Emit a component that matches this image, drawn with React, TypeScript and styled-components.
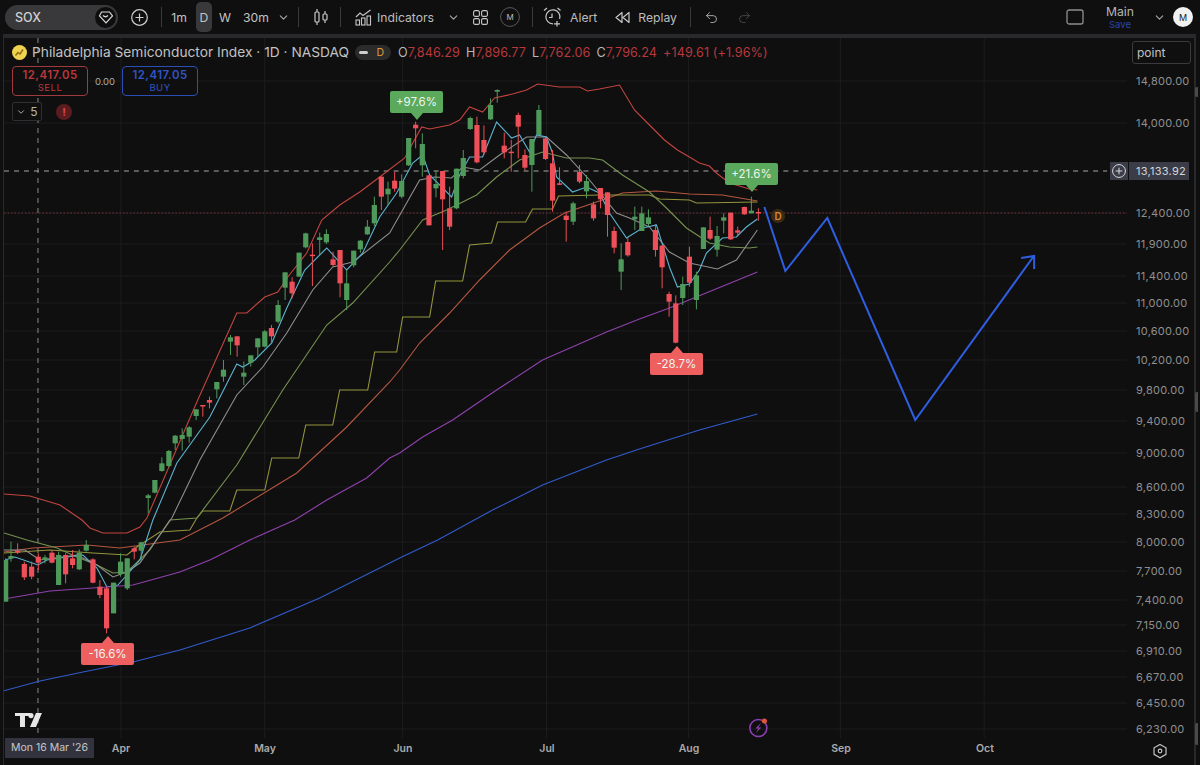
import React from 'react';
import styled, { createGlobalStyle } from 'styled-components';
import { ChevronDown, Undo2, Redo2 } from 'lucide-react';

const GlobalStyle = createGlobalStyle`
  html, body {
    margin: 0;
    padding: 0;
    background: #0f0f10;
    overflow: hidden;
  }
  * { box-sizing: border-box; }
`;

const Page = styled.div`
  width: 1200px;
  height: 765px;
  display: flex;
  flex-direction: column;
  background: #0f0f10;
  color: #c9c9c9;
  font-family: Inter, 'Liberation Sans', sans-serif;
  font-size: 13px;
  overflow: hidden;
`;

const Toolbar = styled.header`
  height: 34px;
  flex: none;
  display: flex;
  align-items: center;
  padding: 0 7px 0 5px;
`;

const ToolGroup = styled.div<{ $gap?: number; $left?: number }>`
  display: flex;
  align-items: center;
  gap: ${(p) => p.$gap ?? 0}px;
  margin-left: ${(p) => p.$left ?? 0}px;
`;

const Symbol = styled.div`
  width: 113px;
  height: 25px;
  display: flex;
  align-items: center;
  justify-content: space-between;
  padding: 0 2px 0 10px;
  border-radius: 13px;
  background: #39393b;
  color: #d0d0d0;
  font-size: 12.5px;
  font-weight: 500;
`;

const SymbolBadge = styled.span`
  width: 21px;
  height: 21px;
  display: flex;
  align-items: center;
  justify-content: center;
  border-radius: 50%;
  background: #0e0e0f;
`;

const Divider = styled.span<{ $left: number }>`
  width: 1px;
  height: 20px;
  margin-left: ${(p) => p.$left}px;
  background: #3a3a3c;
`;

const Interval = styled.span<{ $active?: boolean; $width: number }>`
  width: ${(p) => p.$width}px;
  height: 30px;
  display: flex;
  align-items: center;
  justify-content: center;
  border-radius: 5px;
  background: ${(p) => (p.$active ? '#39393b' : 'transparent')};
  color: #c4c4c4;
  font-size: 12.2px;
`;

const ToolLabel = styled.span`
  color: #bdbdbd;
  font-size: 12.2px;
  white-space: nowrap;
`;

const LayoutTitle = styled.div`
  width: 40px;
  margin-left: 16px;
  display: flex;
  flex-direction: column;
  align-items: center;
  color: #b5b5b5;
  font-size: 12.2px;
  line-height: 14px;
`;

const SaveLabel = styled.span`
  margin-top: 1px;
  color: #2a46a8;
  font-size: 9.5px;
  line-height: 10px;
`;

const Avatar = styled.span`
  width: 20px;
  height: 20px;
  margin-left: 7px;
  display: flex;
  align-items: center;
  justify-content: center;
  border-radius: 50%;
  background: #f1f1f1;
  color: #222;
  font-size: 9px;
`;

const Spacer = styled.div`
  flex: 1;
`;

const ChartFrame = styled.main`
  position: relative;
  flex: 1;
  margin-right: 4px;
  margin-left: 3px;
  border-top: 4px solid #29292b;
  border-left: 1px solid #29292b;
  border-right: 2px solid #29292b;
`;

const Canvas = styled.svg`
  position: absolute;
  inset: 0;
  width: 100%;
  height: 100%;
  display: block;
`;

const Legend = styled.div`
  position: absolute;
  left: 8px;
  top: 3px;
  display: flex;
  flex-direction: column;
  align-items: flex-start;
`;

const TitleRow = styled.div`
  height: 22px;
  display: flex;
  align-items: center;
  white-space: nowrap;
`;

const SymbolName = styled.span`
  margin-left: 5px;
  color: #c2c2c2;
  font-size: 13.75px;
`;

const StatusPill = styled.span`
  width: 36px;
  height: 15px;
  margin-left: 6px;
  padding: 0 7px 0 4px;
  display: flex;
  align-items: center;
  justify-content: space-between;
  border-radius: 8px;
  background: #2b2b2c;
  color: #dc9c3e;
  font-size: 10.5px;
`;

const PillDash = styled.span`
  width: 9px;
  height: 3px;
  border-radius: 2px;
  background: #cfcfcf;
`;

const Ohlc = styled.span`
  margin-left: 7px;
  font-size: 12.6px;
  color: #b8b8b8;
  letter-spacing: 0.1px;
`;

const OhlcValue = styled.span<{ $gap?: number }>`
  color: #b8383c;
  margin-right: ${(p) => p.$gap ?? 6}px;
`;

const TradeRow = styled.div`
  margin-top: 3px;
  display: flex;
  align-items: center;
`;

const TradeButton = styled.div<{ $tone: string; $text: string }>`
  width: 76px;
  height: 30px;
  display: flex;
  flex-direction: column;
  align-items: center;
  justify-content: center;
  border: 1px solid ${(p) => p.$tone};
  border-radius: 4px;
  background: #0f0f10;
  color: ${(p) => p.$text};
  font-size: 11.4px;
  font-weight: 600;
  line-height: 13px;
  letter-spacing: 0.5px;
`;

const TradeSide = styled.span`
  font-size: 9.5px;
  font-weight: 400;
  letter-spacing: 0.5px;
  line-height: 11px;
`;

const Spread = styled.span`
  width: 34px;
  text-align: center;
  color: #aaa;
  font-size: 9.5px;
`;

const StudyRow = styled.div`
  margin-top: 6px;
  display: flex;
  align-items: center;
  gap: 14px;
`;

const StudyToggle = styled.div`
  width: 30px;
  height: 19px;
  display: flex;
  align-items: center;
  justify-content: center;
  gap: 4px;
  border: 1px solid #2f2f31;
  border-radius: 2px;
  background: #0f0f10;
  color: #b5b5b5;
  font-size: 12px;
`;

const AlertDot = styled.span`
  width: 16px;
  height: 16px;
  display: flex;
  align-items: center;
  justify-content: center;
  border-radius: 50%;
  background: #5a1c1e;
  color: #d8454a;
  font-size: 11px;
  font-weight: 700;
`;

const ScaleMode = styled.div`
  position: absolute;
  right: 3px;
  top: 3px;
  width: 59px;
  height: 23px;
  display: flex;
  align-items: center;
  padding-left: 4px;
  border: 1px solid #3b3b3d;
  border-radius: 3px;
  color: #c2c2c2;
  font-size: 12px;
`;

const PriceTick = styled.span<{ $y: number }>`
  position: absolute;
  left: 1132px;
  top: ${(p) => p.$y - 38 - 8}px;
  height: 16px;
  line-height: 16px;
  color: #8f8f8f;
  font-size: 11px;
  letter-spacing: 0.25px;
`;

const CrosshairPrice = styled.div`
  position: absolute;
  left: 1106px;
  top: 124px;
  display: flex;
  gap: 1px;
  height: 18px;
`;

const CrosshairAdd = styled.span`
  width: 18px;
  display: flex;
  align-items: center;
  justify-content: center;
  background: #3a3c48;
`;

const CrosshairValue = styled.span`
  width: 60px;
  padding-left: 7px;
  background: #3a3c48;
  color: #d6d6d6;
  font-size: 11px;
  line-height: 18px;
  letter-spacing: 0.25px;
`;

const CrosshairDate = styled.div`
  position: absolute;
  left: 1px;
  top: 700px;
  width: 89px;
  height: 20px;
  background: #32333e;
  color: #c8c8c8;
  font-size: 10.5px;
  line-height: 20px;
  text-align: center;
`;

const MonthTick = styled.span<{ $x: number }>`
  position: absolute;
  left: ${(p) => p.$x - 4 - 20}px;
  top: 703px;
  width: 40px;
  text-align: center;
  color: #aaa;
  font-size: 10.5px;
  font-weight: 600;
  line-height: 16px;
`;

const Callout = styled.div<{ $x: number; $y: number; $tone: string; $tip: 'up' | 'down' }>`
  position: absolute;
  left: ${(p) => p.$x - 4}px;
  top: ${(p) => p.$y - 38}px;
  width: 53px;
  height: 22px;
  border-radius: 2px;
  background: ${(p) => p.$tone};
  color: #eef5ee;
  font-size: 11.5px;
  line-height: 22px;
  text-align: center;

  &::after {
    content: '';
    position: absolute;
    left: 50%;
    margin-left: -6px;
    ${(p) => (p.$tip === 'down' ? 'top: 100%' : 'bottom: 100%')};
    border-left: 6px solid transparent;
    border-right: 6px solid transparent;
    ${(p) => (p.$tip === 'down' ? 'border-top' : 'border-bottom')}: 7px solid ${(p) => p.$tone};
  }
`;

const DividendMark = styled.span`
  position: absolute;
  left: 767px;
  top: 171px;
  width: 14px;
  height: 14px;
  display: flex;
  align-items: center;
  justify-content: center;
  border-radius: 50%;
  background: #3a2a16;
  color: #d5872c;
  font-size: 10px;
  font-weight: 600;
`;

const EdgeTab = styled.span<{ $y: number; $height: number }>`
  position: absolute;
  right: -4px;
  top: ${(p) => p.$y - 38}px;
  width: 3px;
  height: ${(p) => p.$height}px;
  border-radius: 2px 0 0 2px;
  background: #4a4a4c;
`;

const GREEN = '#4f9a5b';
const RED = '#ee4f58';

// [bodyTop, bodyBottom, wickTop, wickBottom, centre x in the crop, up?]
type Row = [number, number, number, number, number, boolean];
type Candle = { x: number; top: number; bottom: number; high: number; low: number; up: boolean };

const g = (x: number, a: number, b: number, c: number, d: number): Row => [a, b, c, d, x, true];
const r = (x: number, a: number, b: number, c: number, d: number): Row => [a, b, c, d, x, false];

// candles were read off 3x crops, so each batch keeps the crop's origin
const batch = (ox: number, oy: number, rows: Row[]): Candle[] =>
  rows.map(([a, b, c, d, x, up]) => ({
    x: ox + x / 3,
    top: oy + a / 3,
    bottom: oy + b / 3,
    high: oy + c / 3,
    low: oy + d / 3,
    up,
  }));

const candles: Candle[] = [
  ...batch(0, 520, [
    g(17, 120, 245, 115, 245),
    g(33, 108, 115, 65, 125),
    r(53, 92, 98, 70, 102),
    r(73, 132, 172, 125, 180),
    r(95, 140, 170, 125, 178),
    r(115, 110, 128, 100, 150),
    g(135, 112, 120, 105, 130),
    r(156, 98, 128, 90, 130),
    g(176, 105, 195, 95, 195),
    r(197, 105, 163, 100, 190),
    r(218, 115, 135, 90, 145),
    g(238, 98, 148, 88, 150),
    g(259, 75, 92, 60, 95),
    r(279, 118, 188, 115, 190),
    r(300, 200, 225, 180, 235),
    r(320, 205, 325, 200, 340),
    g(341, 188, 280, 188, 280),
    g(362, 125, 162, 100, 170),
    g(382, 115, 205, 115, 210),
    r(403, 85, 95, 80, 118),
    g(424, 67, 92, 65, 125),
  ]),
  ...batch(140, 220, [
    g(25, 826, 834, 822, 880),
    g(45, 780, 818, 780, 820),
    g(66, 730, 753, 712, 755),
    g(87, 693, 738, 690, 742),
    g(106, 647, 670, 645, 690),
    g(127, 645, 657, 625, 692),
    g(148, 622, 650, 618, 668),
    g(169, 568, 588, 568, 600),
    r(189, 555, 558, 555, 590),
    r(209, 540, 548, 530, 565),
    g(231, 486, 508, 486, 535),
    g(251, 449, 470, 420, 485),
    g(272, 352, 365, 345, 405),
    r(292, 349, 376, 349, 410),
    g(312, 458, 470, 425, 495),
    g(333, 406, 428, 406, 440),
    g(354, 355, 382, 355, 410),
    g(375, 334, 380, 330, 382),
    r(395, 324, 349, 315, 368),
    g(415, 255, 305, 240, 310),
    g(436, 157, 203, 157, 240),
    r(457, 185, 220, 172, 235),
    g(478, 98, 170, 98, 170),
    g(498, 40, 82, 38, 85),
    r(518, 104, 108, 70, 198),
    g(540, 52, 60, 38, 105),
    g(560, 42, 67, 28, 72),
    r(580, 118, 135, 95, 140),
    r(601, 90, 190, 90, 232),
    g(621, 190, 240, 150, 270),
    g(642, 92, 136, 92, 142),
    g(662, 62, 88, 60, 98),
    g(683, 20, 43, 0, 45),
    g(704, -45, 10, -70, 18),
  ]),
  ...batch(380, 80, [
    r(5, 290, 350, 290, 390),
    g(25, 326, 343, 305, 375),
    r(45, 302, 326, 275, 335),
    g(66, 303, 350, 283, 355),
    g(87, 174, 256, 174, 258),
    r(108, 134, 145, 125, 205),
    g(128, 192, 256, 160, 290),
    r(148, 286, 436, 286, 436),
    g(169, 312, 325, 272, 352),
    r(189, 273, 358, 273, 510),
    r(210, 385, 440, 320, 450),
    g(231, 266, 385, 266, 388),
    g(251, 234, 288, 210, 295),
    g(272, 114, 147, 110, 150),
    r(292, 135, 247, 110, 250),
    r(313, 180, 217, 136, 225),
    g(333, 75, 118, 55, 120),
    g(353, 30, 35, 28, 68),
    r(374, 197, 217, 158, 235),
    r(395, 215, 218, 180, 275),
    r(416, 105, 140, 98, 235),
    r(436, 225, 263, 208, 270),
    g(457, 177, 255, 177, 335),
    g(478, 90, 165, 75, 165),
    r(498, 175, 237, 170, 240),
    r(519, 250, 362, 210, 395),
    r(540, 310, 313, 262, 315),
    r(560, 407, 420, 395, 485),
    g(581, 370, 425, 365, 435),
    r(600, 276, 305, 255, 310),
    g(621, 303, 334, 285, 355),
  ]),
  ...batch(590, 150, [
    r(12, 163, 205, 155, 212),
    r(33, 114, 148, 114, 175),
    r(54, 127, 195, 127, 260),
    r(74, 243, 293, 230, 310),
    g(95, 328, 365, 280, 420),
    r(115, 276, 316, 262, 320),
    g(136, 200, 208, 170, 240),
    g(157, 190, 243, 170, 243),
    g(177, 202, 222, 178, 228),
    r(198, 240, 300, 222, 320),
    r(218, 287, 352, 285, 415),
    r(239, 432, 455, 425, 500),
    r(259, 460, 578, 436, 580),
    g(280, 402, 444, 380, 465),
    r(300, 320, 398, 290, 410),
    g(321, 376, 450, 365, 478),
    g(342, 232, 297, 232, 297),
    r(362, 240, 266, 200, 270),
    g(383, 258, 299, 228, 320),
    g(403, 202, 212, 190, 250),
    r(424, 188, 268, 188, 270),
    r(445, 241, 248, 230, 258),
    r(465, 171, 193, 170, 194),
    g(486, 182, 190, 140, 190),
    r(507, 186, 190, 175, 212),
  ]),
];

const studies: { color: string; points: string }[] = [
  {
    color: '#c2453f',
    points:
      '4,494 30,496 60,505 82,520 90,528 103,533 127,533 140,527 147,518 197,402 237,313 247,313 265,297 278,292 288,277 307,253 322,220 340,205 360,192 380,177 405,158 422,127 430,129 450,125 460,120 470,107 483,112 495,98 513,94 527,90 538,84 560,87 580,87 588,91 600,89 620,85 635,110 650,125 665,140 678,150 690,157 700,163 710,166 717,173 730,183 750,189 758,190',
  },
  {
    color: '#b5573f',
    points: '4,552 33,548 87,545 120,548 180,540 223,518 297,473 347,427 390,382 400,370 420,343 450,313 480,280 510,250 540,228 565,213 597,202 623,193 657,191 690,194 723,195 758,201',
  },
  {
    color: '#94943c',
    points:
      '4,553 50,550 93,553 127,555 137,547 160,532 190,530 197,518 203,511 230,511 237,490 265,490 272,458 299,458 306,425 333,425 340,390 368,390 375,352 397,352 403,317 430,317 436,281 463,281 470,245 492,243 498,222 526,222 533,209 553,209 559,196 600,195 650,195 660,199 690,200 697,203 758,202',
  },
  {
    color: '#76924f',
    points: '4,533 27,540 57,548 77,557 97,565 113,573 127,572 150,550 170,520 197,518 237,465 283,390 327,325 353,303 390,262 400,250 423,220 447,210 477,195 497,177 520,160 543,152 567,158 590,158 603,160 623,175 650,192 667,208 687,228 710,243 730,247 750,248 758,247',
  },
  {
    color: '#8f8f8f',
    points: '4,550 25,550 40,560 77,555 97,565 113,577 127,572 140,563 172,518 200,460 237,395 263,367 287,333 313,290 333,267 353,262 390,233 420,180 435,177 452,178 463,167 480,170 500,155 527,137 547,137 567,155 590,180 617,213 630,218 650,227 670,252 690,263 718,269 737,260 758,230',
  },
  {
    color: '#5cb4d0',
    points:
      '5,560 15,557 38,565 47,560 67,557 83,555 97,568 107,587 118,585 127,575 140,560 153,520 177,463 210,417 237,364 243,367 255,360 272,343 287,308 305,270 327,248 347,270 363,253 380,217 397,193 413,163 423,155 430,175 452,197 460,175 470,157 483,157 497,122 512,138 520,135 530,152 537,135 547,137 553,153 557,177 573,192 587,187 600,193 610,213 627,238 643,228 657,225 670,267 678,287 690,284 700,270 707,253 723,238 737,237 747,227 758,219',
  },
  {
    color: '#8f42ac',
    points: '4,599 50,591 107,587 133,585 180,572 210,560 250,540 295,520 327,500 367,478 390,458 400,453 423,437 453,420 497,390 543,360 607,332 640,319 670,308 758,272',
  },
  {
    color: '#325ccc',
    points: '3,691 40,681 83,672 133,662 180,650 250,628 320,598 400,558 438,540 493,510 543,485 607,460 640,449 700,430 758,414',
  },
];

const priceTicks: [string, number][] = [
  ['14,800.00', 81],
  ['14,000.00', 123],
  ['12,400.00', 213],
  ['11,900.00', 244],
  ['11,400.00', 276],
  ['11,000.00', 303],
  ['10,600.00', 331],
  ['10,200.00', 360],
  ['9,800.00', 390],
  ['9,400.00', 421],
  ['9,000.00', 453],
  ['8,600.00', 487],
  ['8,300.00', 514],
  ['8,000.00', 542],
  ['7,700.00', 571],
  ['7,400.00', 600],
  ['7,150.00', 625],
  ['6,910.00', 651],
  ['6,670.00', 677],
  ['6,450.00', 703],
  ['6,230.00', 729],
];

const monthTicks: [string, number][] = [
  ['Apr', 121],
  ['May', 265],
  ['Jun', 403],
  ['Jul', 547],
  ['Aug', 689],
  ['Sep', 841],
  ['Oct', 985],
];

const PriceChart = () => (
  <Canvas viewBox="4 38 1191 727" preserveAspectRatio="none">
    {priceTicks.map(([label, y]) => (
      <line key={label} x1="4" x2="1128" y1={y} y2={y} stroke="#1d1d1e" />
    ))}
    {monthTicks.map(([label, x]) => (
      <line key={label} x1={x} x2={x} y1="38" y2="738" stroke="#1d1d1e" />
    ))}
    <line x1="38" x2="38" y1="38" y2="738" stroke="#8c8c8c" strokeDasharray="5 5" />
    <line x1="4" x2="1108" y1="171" y2="171" stroke="#a8a8a8" strokeDasharray="5 5" />
    <line x1="4" x2="1128" y1="213" y2="213" stroke="#7d2f33" strokeDasharray="1.5 2" />
    {studies.map((s) => (
      <polyline key={s.color} points={s.points} fill="none" stroke={s.color} strokeWidth="1.1" />
    ))}
    {candles.map((c) => {
      const color = c.up ? GREEN : RED;
      return (
        <g key={`${c.x}-${c.top}`}>
          <line x1={c.x} x2={c.x} y1={c.high} y2={c.low} stroke={color} strokeWidth="1" />
          <rect x={c.x - 2.6} y={c.top} width="5.2" height={Math.max(c.bottom - c.top, 1.5)} fill={color} />
        </g>
      );
    })}
    <polyline points="765,207 786,271 828,218 916,420 1034,257" fill="none" stroke="#2f5fe0" strokeWidth="2" />
    <polyline points="1022,258 1035,256 1035,269" fill="none" stroke="#2f5fe0" strokeWidth="2" />
    <path d="M15 713h15v3h-5v11h-5v-11h-5zM31 713a2.6 2.6 0 1 1 0 5.2a2.6 2.6 0 0 1 0-5.2zM36 713h6l-6 14h-6z" fill="#e6e6e6" />
    <circle cx="759" cy="728" r="8.5" fill="none" stroke="#8a3fb0" strokeWidth="1.6" />
    <path d="M761.5 723l-5.5 5.5h3l-2.5 4.5 5.5-5.5h-3z" fill="#8a3fb0" />
    <circle cx="765" cy="721" r="2.6" fill="#e0533f" />
    <path d="M1161 744.5l6 3.3v6.6l-6 3.3-6-3.3v-6.6z" fill="none" stroke="#c4c4c4" strokeWidth="1.2" />
    <circle cx="1161" cy="751" r="1.8" fill="none" stroke="#c4c4c4" strokeWidth="1.2" />
  </Canvas>
);

const DiamondIcon = () => (
  <svg width="15" height="13" viewBox="0 0 15 13" fill="none" stroke="#d8d8d8" strokeWidth="1.2">
    <path d="M3.5 1h8l3 3.8-6.5 7-6.5-7z" />
    <path d="M5 4.5c1.5 1.5 3.5 1.5 5 0" />
  </svg>
);

const PlusCircleIcon = ({ size = 17, color = '#d0d0d0' }: { size?: number; color?: string }) => (
  <svg width={size} height={size} viewBox="0 0 17 17" fill="none" stroke={color} strokeWidth="1.2">
    <circle cx="8.5" cy="8.5" r="7.8" />
    <path d="M8.5 4.5v8M4.5 8.5h8" />
  </svg>
);

const CandlesIcon = () => (
  <svg width="14" height="18" viewBox="0 0 14 18" fill="none" stroke="#c8c8c8" strokeWidth="1.2">
    <rect x="1" y="4" width="4" height="10" rx="1" />
    <path d="M3 1v3M3 14v3" />
    <rect x="9" y="6" width="4" height="6" rx="1" />
    <path d="M11 3v3M11 12v3" />
  </svg>
);

const IndicatorsIcon = () => (
  <svg width="17" height="17" viewBox="0 0 17 17" fill="none" stroke="#c8c8c8" strokeWidth="1.1">
    <path d="M1 8l4-4 3 2.5L15.5 1" />
    <rect x="1" y="11" width="3.5" height="5" />
    <rect x="6.5" y="9" width="3.5" height="7" />
    <rect x="12" y="7" width="3.5" height="9" />
  </svg>
);

const GridIcon = () => (
  <svg width="15" height="15" viewBox="0 0 15 15" fill="none" stroke="#c8c8c8" strokeWidth="1.1">
    <rect x="0.6" y="0.6" width="5.8" height="5.8" rx="1.5" />
    <rect x="8.6" y="0.6" width="5.8" height="5.8" rx="1.5" />
    <rect x="0.6" y="8.6" width="5.8" height="5.8" rx="1.5" />
    <rect x="8.6" y="8.6" width="5.8" height="5.8" rx="1.5" />
  </svg>
);

const ModeIcon = () => (
  <svg width="20" height="20" viewBox="0 0 20 20">
    <circle cx="10" cy="10" r="9.4" fill="none" stroke="#5a5a5c" />
    <text x="10" y="13" textAnchor="middle" fontSize="8" fill="#bdbdbd" fontFamily="Inter, sans-serif">
      M
    </text>
  </svg>
);

const AlertIcon = () => (
  <svg width="19" height="20" viewBox="0 0 19 20" fill="none" stroke="#c8c8c8" strokeWidth="1.2">
    <path d="M10 16.8a7 7 0 1 1 6.6-5" />
    <path d="M9 6.5v4h-3M1 3.5l3-2.5M14.5 1l3 2.5M14 14v5.5M11 16.8h6" />
  </svg>
);

const ReplayIcon = () => (
  <svg width="15" height="13" viewBox="0 0 15 13" fill="none" stroke="#c8c8c8" strokeWidth="1.2" strokeLinejoin="round">
    <path d="M7 1.5v10L1 6.5zM14 1.5v10L8 6.5z" />
  </svg>
);

const LogoDot = () => (
  <svg width="15" height="15" viewBox="0 0 15 15">
    <circle cx="7.5" cy="7.5" r="7.5" fill="#efd24f" />
    <path d="M3.5 10.5l2.5-3 2 1.5 3-4.5" fill="none" stroke="#8a6d12" strokeWidth="1.5" />
  </svg>
);

const App = () => {
  return (
    <Page>
      <GlobalStyle />
      <Toolbar>
        <Symbol>
          SOX
          <SymbolBadge>
            <DiamondIcon />
          </SymbolBadge>
        </Symbol>
        <ToolGroup $left={13}>
          <PlusCircleIcon />
        </ToolGroup>
        <Divider $left={13} />
        <ToolGroup $left={3} $gap={3}>
          <Interval $width={28}>1m</Interval>
          <Interval $width={16} $active>
            D
          </Interval>
          <Interval $width={20}>W</Interval>
          <Interval $width={36}>30m</Interval>
          <ChevronDown size={13} color="#a8a8a8" />
        </ToolGroup>
        <Divider $left={8} />
        <ToolGroup $left={15}>
          <CandlesIcon />
        </ToolGroup>
        <Divider $left={12} />
        <ToolGroup $left={14} $gap={5}>
          <IndicatorsIcon />
          <ToolLabel>Indicators</ToolLabel>
        </ToolGroup>
        <ToolGroup $left={13}>
          <ChevronDown size={13} color="#a8a8a8" />
        </ToolGroup>
        <ToolGroup $left={13} $gap={12}>
          <GridIcon />
          <ModeIcon />
        </ToolGroup>
        <Divider $left={12} />
        <ToolGroup $left={10} $gap={8}>
          <AlertIcon />
          <ToolLabel>Alert</ToolLabel>
        </ToolGroup>
        <ToolGroup $left={18} $gap={8}>
          <ReplayIcon />
          <ToolLabel>Replay</ToolLabel>
        </ToolGroup>
        <Divider $left={13} />
        <ToolGroup $left={13} $gap={18}>
          <Undo2 size={15} color="#b5b5b5" strokeWidth={1.4} />
          <Redo2 size={15} color="#4c4c4e" strokeWidth={1.4} />
        </ToolGroup>
        <Spacer />
        <svg width="18" height="16" viewBox="0 0 18 16" fill="none" stroke="#8f8f8f" strokeWidth="1.3">
          <rect x="1" y="1" width="16" height="14" rx="2" />
        </svg>
        <LayoutTitle>
          Main
          <SaveLabel>Save</SaveLabel>
        </LayoutTitle>
        <ToolGroup $left={13}>
          <ChevronDown size={13} color="#a8a8a8" />
        </ToolGroup>
        <Avatar>M</Avatar>
      </Toolbar>
      <ChartFrame>
        <PriceChart />
        <Legend>
          <TitleRow>
            <LogoDot />
            <SymbolName>Philadelphia Semiconductor Index · 1D · NASDAQ</SymbolName>
            <StatusPill>
              <PillDash />D
            </StatusPill>
            <Ohlc>
              O<OhlcValue>7,846.29</OhlcValue>H<OhlcValue>7,896.77</OhlcValue>L<OhlcValue>7,762.06</OhlcValue>C
              <OhlcValue>7,796.24</OhlcValue>
              <OhlcValue $gap={0}>+149.61 (+1.96%)</OhlcValue>
            </Ohlc>
          </TitleRow>
          <TradeRow>
            <TradeButton $tone="#a13a3e" $text="#b9383d">
              12,417.05
              <TradeSide>SELL</TradeSide>
            </TradeButton>
            <Spread>0.00</Spread>
            <TradeButton $tone="#2b4fb4" $text="#2f55c4">
              12,417.05
              <TradeSide>BUY</TradeSide>
            </TradeButton>
          </TradeRow>
          <StudyRow>
            <StudyToggle>
              <ChevronDown size={10} color="#c8c8c8" />5
            </StudyToggle>
            <AlertDot>!</AlertDot>
          </StudyRow>
        </Legend>
        <ScaleMode>point</ScaleMode>
        {priceTicks.map(([label, y]) => (
          <PriceTick key={label} $y={y}>
            {label}
          </PriceTick>
        ))}
        <CrosshairPrice>
          <CrosshairAdd>
            <PlusCircleIcon size={14} color="#dcdcdc" />
          </CrosshairAdd>
          <CrosshairValue>13,133.92</CrosshairValue>
        </CrosshairPrice>
        <CrosshairDate>Mon 16 Mar &apos;26</CrosshairDate>
        {monthTicks.map(([label, x]) => (
          <MonthTick key={label} $x={x}>
            {label}
          </MonthTick>
        ))}
        <Callout $x={390} $y={91} $tone="#5aa95c" $tip="down">
          +97.6%
        </Callout>
        <Callout $x={725} $y={163} $tone="#5aa95c" $tip="down">
          +21.6%
        </Callout>
        <Callout $x={650} $y={353} $tone="#ee5f60" $tip="up">
          -28.7%
        </Callout>
        <Callout $x={81} $y={643} $tone="#ee5f60" $tip="up">
          -16.6%
        </Callout>
        <DividendMark>D</DividendMark>
        <EdgeTab $y={87} $height={10} />
        <EdgeTab $y={392} $height={20} />
        <EdgeTab $y={723} $height={22} />
      </ChartFrame>
    </Page>
  );
};

export default App;
